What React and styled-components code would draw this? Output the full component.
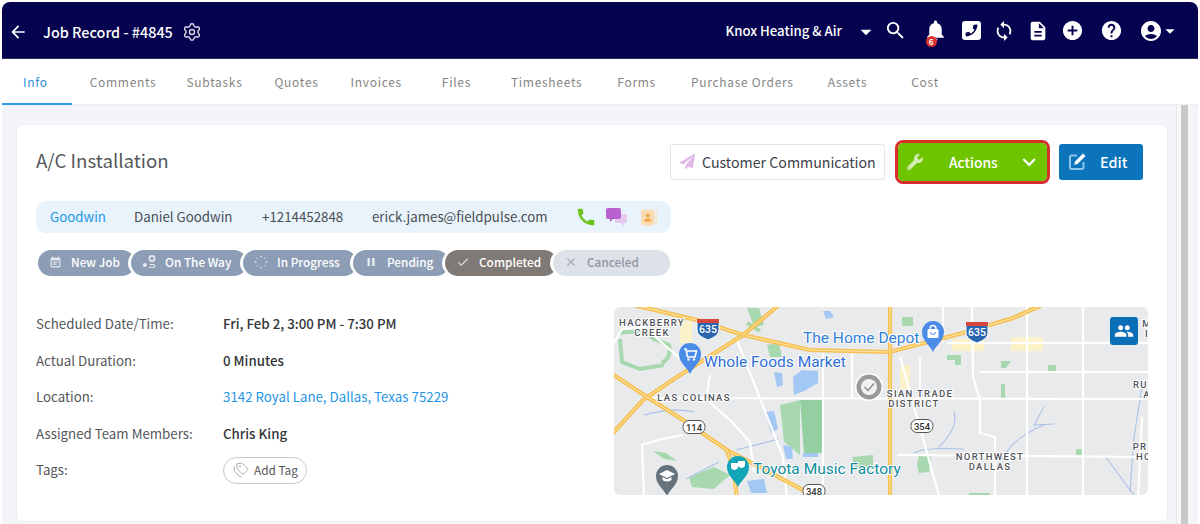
import React from "react";
import styled, { createGlobalStyle } from "styled-components";
import {
  MdArrowBack,
  MdSearch,
  MdNotifications,
  MdSync,
  MdAddCircle,
  MdHelp,
  MdAccountCircle,
  MdArrowDropDown,
  MdDescription,
  MdCall,
  MdPause,
  MdCheck,
  MdClose,
  MdPeople,
  MdExpandMore,
  MdEventNote,
} from "react-icons/md";
import { FaWrench, FaPaperPlane } from "react-icons/fa";
import { Settings, Tags } from "lucide-react";

const GlobalStyle = createGlobalStyle`
  html, body {
    margin: 0;
    padding: 0;
    background: #fff;
  }
  * {
    box-sizing: border-box;
  }
  body {
    font-family: "Noto Sans CJK SC", "Noto Sans", sans-serif;
  }
`;

const TABS = [
  { label: "Info", gap: 0, active: true },
  { label: "Comments", gap: 42 },
  { label: "Subtasks", gap: 30 },
  { label: "Quotes", gap: 32 },
  { label: "Invoices", gap: 32 },
  { label: "Files", gap: 40 },
  { label: "Timesheets", gap: 40 },
  { label: "Forms", gap: 35 },
  { label: "Purchase Orders", gap: 35 },
  { label: "Assets", gap: 34 },
  { label: "Cost", gap: 44 },
];

const STATUSES = [
  { label: "New Job", width: 97, icon: <MdEventNote size={13} />, first: true },
  { label: "On The Way", width: 116, icon: <RouteIcon /> },
  { label: "In Progress", width: 114, icon: <DotsIcon /> },
  { label: "Pending", width: 96, icon: <MdPause size={14} /> },
  { label: "Completed", width: 112, icon: <MdCheck size={14} />, kind: "done" },
  { label: "Canceled", width: 117, icon: <MdClose size={14} />, kind: "off" },
];

function RouteIcon() {
  return (
    <svg width="14" height="14" viewBox="0 0 14 14" fill="none">
      <circle cx="2.800" cy="10" r="2" fill="#fff" />
      <circle cx="10" cy="3.500" r="2.600" stroke="#fff" strokeWidth="1.600" />
      <path d="M7 12.300h4.500a1.400 1.400 0 0 0 0-2.800H8" stroke="#fff" strokeWidth="1.100" />
    </svg>
  );
}

function DotsIcon() {
  const dots = [0, 45, 90, 135, 180, 225, 270, 315];
  return (
    <svg width="14" height="14" viewBox="0 0 14 14">
      {dots.map((a, i) => (
        <circle
          key={a}
          cx={7 + 5.4 * Math.cos((a * Math.PI) / 180)}
          cy={7 + 5.4 * Math.sin((a * Math.PI) / 180)}
          r={i % 2 ? 0.7 : 1}
          fill="#e6ebf2"
        />
      ))}
    </svg>
  );
}

function PhoneBox() {
  return (
    <svg width="19" height="19" viewBox="0 0 19 19">
      <rect width="19" height="19" rx="3" fill="#fff" />
      <path
        d="M14.600 3.600c.5 0 .9.4.8.9-.5 5.800-5.100 10.400-10.900 10.900-.5 0-.9-.3-.9-.8v-2.300c0-.4.3-.7.6-.8l2.500-.5c.3 0 .6 0 .8.300l1 1.500c1.700-.9 3.100-2.300 4-4l-1.400-1.100c-.2-.2-.3-.5-.3-.8l.6-2.500c.1-.4.4-.6.8-.6z"
        fill="#05034f"
      />
    </svg>
  );
}

function ContactBook() {
  return (
    <svg width="16" height="17" viewBox="0 0 16 17">
      <rect x="0" y="0.500" width="13.500" height="16" rx="2" fill="#f9dcb4" />
      <circle cx="6.800" cy="6.500" r="2" fill="#f0a440" />
      <path d="M3 12.500c.3-2.200 1.800-3 3.800-3s3.500.8 3.800 3z" fill="#f0a440" />
      <rect x="14.500" y="2.500" width="1.500" height="3" fill="#f9dcb4" />
      <rect x="14.500" y="7" width="1.500" height="3" fill="#f9dcb4" />
      <rect x="14.500" y="11.500" width="1.500" height="3" fill="#f9dcb4" />
    </svg>
  );
}

function ChatBubbles() {
  return (
    <svg width="21" height="18" viewBox="0 0 21 18">
      <path d="M9 6h10a2 2 0 0 1 2 2v5a2 2 0 0 1-2 2h-1v3l-3-3H9z" fill="#e6c8ee" />
      <path d="M2 0h11a2 2 0 0 1 2 2v7a2 2 0 0 1-2 2H7l-3 3v-3H2a2 2 0 0 1-2-2V2a2 2 0 0 1 2-2z" fill="#b762cf" />
    </svg>
  );
}

function EditGlyph() {
  return (
    <svg width="19" height="19" viewBox="0 0 19 19" fill="none">
      <path
        d="M9 3.500H3.500A1.500 1.500 0 0 0 2 5v10.500A1.500 1.500 0 0 0 3.500 17H14a1.500 1.500 0 0 0 1.500-1.500V10"
        stroke="#8cc4ea"
        strokeWidth="2"
      />
      <path d="M15 1.500l2.500 2.500-8 8-3.300.8.800-3.300z" fill="#fff" />
    </svg>
  );
}

const YELLOW_ROADS = [
  "M19 -2 L83 13 L129 28 L196 43 L276 45 L283 43 L349 26 L399 11 L428 -2",
  "M165 -2 L129 28 L63 70 L29 93 L-2 127",
  "M-2 67 L33 90 L69 113 L113 143 L189 183 L215 192",
  "M113 143 L120 165 L123 192",
  "M276 -2 L276 192",
];

const WHITE_ROADS = [
  "M33 91 L534 92",
  "M333 36 L534 36",
  "M366 65 L534 65",
  "M283 148 L534 150",
  "M329 -2 L329 36",
  "M358 -2 L359 70 L366 93 L366 126 L381 130 L381 192",
  "M413 -2 L413 192",
  "M469 -2 L469 192",
  "M528 110 L524 192",
  "M286 50 L326 192",
  "M123 33 L169 150 L173 192",
  "M209 46 L209 192",
  "M96 68 L92 92 L118 115 L136 135 L140 165",
  "M30 192 L28 138 L48 132 L69 128",
  "M0 36 L8 22 L30 20 L62 48 L78 62",
  "M238 92 L238 46",
  "M306 50 L306 92",
];

const WATER = [
  "M160 65 L168 66 L169 78 L163 80 Z",
  "M179 70 L188 63 L204 64 L204 76 L190 84 L180 88 Z",
  "M151 105 L160 104 L164 122 L157 126 Z",
  "M169 138 L178 140 L179 152 L172 152 Z",
  "M189 146 L204 146 L204 150 L189 150 Z",
  "M133 174 L150 172 L153 186 L137 186 Z",
  "M209 4 L216 4 L220 10 L212 12 Z",
];

const GREEN = [
  "M133 1 L145 1 L150 18 L140 20 Z",
  "M153 38 L165 36 L168 50 L156 50 Z",
  "M166 98 L186 93 L186 148 L170 135 Z",
  "M39 144 L52 146 L63 154 L50 152 Z",
  "M75 170 L100 160 L116 168 L100 182 L78 180 Z",
  "M238 150 L259 148 L259 162 L242 163 Z",
  "M288 10 L299 10 L299 19 L288 19 Z",
  "M333 48 L347 48 L347 58 L341 58 L341 53 L333 53 Z",
  "M387 54 L397 54 L392 61 L387 61 Z",
  "M434 58 L442 58 L442 64 L434 64 Z",
  "M387 77 L391 77 L391 91 L387 91 Z",
  "M462 142 L468 142 L468 148 L462 148 Z",
  "M305 148 L317 148 L315 165 L305 166 L303 158 Z",
  "M355 186 L376 186 L376 190 L355 190 Z",
];

const DARK_GREEN = ["M186 93 L209 93 L209 146 L190 146 Z"];

const GREEN_RIBBONS = [
  "M6 26 Q28 22 40 32 L55 38 Q58 50 48 56",
  "M6 32 L8 55 L26 62 L50 58",
  "M133 16 L146 24",
];

const THIN_BLUE = [
  "M300 146 Q310 140 350 142",
  "M340 105 Q345 120 325 140",
  "M430 100 L420 118 L440 117",
  "M430 118 Q400 130 388 152",
  "M492 150 L510 175 L520 188",
  "M528 80 L520 130 L516 185",
  "M30 108 Q60 100 80 105",
  "M122 143 L165 132",
  "M72 172 L105 155",
];

const PALE = [
  [66, 14, 12, 22],
  [338, 32, 32, 12],
  [397, 30, 32, 14],
  [286, 58, 10, 24],
];

const GmapLabel = styled.text`
  font-family: Roboto, "Liberation Sans", sans-serif;
  font-size: 9.500px;
  font-weight: 500;
  letter-spacing: 1.300px;
  fill: #4f5358;
  text-anchor: middle;
  stroke: #fff;
  stroke-width: 2px;
  paint-order: stroke;
`;

const PoiLabel = styled.text`
  font-family: Roboto, "Liberation Sans", sans-serif;
  font-size: 15.500px;
  fill: ${(p) => p.$color};
  stroke: #fff;
  stroke-width: 2px;
  paint-order: stroke;
`;

const ShieldText = styled.text`
  font-family: Roboto, "Liberation Sans", sans-serif;
  font-size: ${(p) => p.$size}px;
  font-weight: 500;
  fill: ${(p) => p.$color};
  text-anchor: middle;
`;

function Interstate({ x, y }) {
  return (
    <g transform={`translate(${x} ${y})`}>
      <path d="M-11 -8 H11 V2 Q11 8 0 12 Q-11 8 -11 2 Z" fill="#2a66ad" stroke="#fff" />
      <path d="M-11 -9 H11 V-5 H-11 Z" fill="#d8453c" />
      <ShieldText y="5" $size={10.5} $color="#fff">
        635
      </ShieldText>
    </g>
  );
}

function StateRoad({ x, y, text }) {
  return (
    <g transform={`translate(${x} ${y})`}>
      <rect x="-11" y="-6.500" width="22" height="13" rx="6" fill="#fff" stroke="#555" strokeWidth="1" />
      <ShieldText y="3.500" $size={9.5} $color="#333">
        {text}
      </ShieldText>
    </g>
  );
}

function Pin({ x, y, color, children }) {
  return (
    <g transform={`translate(${x} ${y})`}>
      <path d="M0 20 C-3 13 -11 9 -11 0 A11 11 0 1 1 11 0 C11 9 3 13 0 20 Z" fill={color} />
      {children}
    </g>
  );
}

function MapArt() {
  return (
    <svg width="534" height="188" viewBox="0 0 534 188">
      <rect width="534" height="188" fill="#e9eaec" />
      {PALE.map(([x, y, w, h]) => (
        <rect key={x} x={x} y={y} width={w} height={h} fill="#fbf2c9" />
      ))}
      {GREEN.map((d) => (
        <path key={d} d={d} fill="#a8d8b0" />
      ))}
      {DARK_GREEN.map((d) => (
        <path key={d} d={d} fill="#93cfa0" />
      ))}
      {GREEN_RIBBONS.map((d) => (
        <path key={d} d={d} fill="none" stroke="#a8d8b0" strokeWidth="4" />
      ))}
      {WATER.map((d) => (
        <path key={d} d={d} fill="#a3c8f4" />
      ))}
      {THIN_BLUE.map((d) => (
        <path key={d} d={d} fill="none" stroke="#a9c2e8" strokeWidth="1.100" />
      ))}
      {WHITE_ROADS.map((d) => (
        <path key={d} d={d} fill="none" stroke="#fff" strokeWidth="2.200" />
      ))}
      {YELLOW_ROADS.map((d) => (
        <g key={d}>
          <path d={d} fill="none" stroke="#f6bf4f" strokeWidth="4.200" />
          <path d={d} fill="none" stroke="#fdeab0" strokeWidth="1" />
        </g>
      ))}

      <Interstate x={94} y={21} />
      <Interstate x={363} y={24} />
      <StateRoad x={80} y={120} text="114" />
      <StateRoad x={308} y={119} text="354" />
      <StateRoad x={200} y={184} text="348" />

      <GmapLabel x={38} y={19}>HACKBERRY</GmapLabel>
      <GmapLabel x={38} y={29}>CREEK</GmapLabel>
      <GmapLabel x={80} y={94}>LAS COLINAS</GmapLabel>
      <GmapLabel x={306} y={90}>SIAN TRADE</GmapLabel>
      <GmapLabel x={300} y={100}>DISTRICT</GmapLabel>
      <GmapLabel x={376} y={153}>NORTHWEST</GmapLabel>
      <GmapLabel x={376} y={163}>DALLAS</GmapLabel>
      <GmapLabel x={530} y={81}>RUS</GmapLabel>
      <GmapLabel x={533} y={91}>A</GmapLabel>
      <GmapLabel x={526} y={143}>PR</GmapLabel>
      <GmapLabel x={530} y={153}>HO</GmapLabel>
      <GmapLabel x={533} y={20}>M</GmapLabel>
      <GmapLabel x={533} y={30}>I</GmapLabel>

      <PoiLabel x={90} y={60} $color="#2f6fd8">Whole Foods Market</PoiLabel>
      <PoiLabel x={189} y={36} $color="#2f80d8">The Home Depot</PoiLabel>
      <PoiLabel x={139} y={167} $color="#0e8c9c">Toyota Music Factory</PoiLabel>

      <Pin x={76} y={47} color="#4b8ce8">
        <path d="M-6 -5 H-4 L-2.500 3 H5 L6.500 -3 H-3.500" fill="none" stroke="#fff" strokeWidth="1.600" />
        <circle cx="-1.500" cy="5.500" r="1.200" fill="#fff" />
        <circle cx="4" cy="5.500" r="1.200" fill="#fff" />
      </Pin>
      <Pin x={319} y={25} color="#4b8ce8">
        <rect x="-5.500" y="-3" width="11" height="9" rx="1.500" fill="#fff" />
        <path d="M-3 -3 A3 3.500 0 0 1 3 -3" fill="none" stroke="#fff" strokeWidth="1.300" />
        <path d="M-2.500 0 A2.500 2.500 0 0 0 2.500 0" fill="none" stroke="#4b8ce8" strokeWidth="1" />
      </Pin>
      <Pin x={124} y={160} color="#12a5b8">
        <path d="M-7 -4 H0 V1 Q-3.500 5 -7 1 Z" fill="#fff" />
        <path d="M0 -6 H7 V-1 Q3.500 3 0 -1 Z" fill="#fff" />
      </Pin>
      <Pin x={53} y={169} color="#66727c">
        <path d="M0 -6 L8 -2 L0 2 L-8 -2 Z" fill="#fff" />
        <path d="M-4.500 1 V4 Q0 7 4.500 4 V1 L0 3.200 Z" fill="#fff" />
      </Pin>

      <circle cx="255" cy="80" r="14" fill="#fff" />
      <circle cx="255" cy="80" r="12.500" fill="#999" />
      <circle cx="255" cy="80" r="8" fill="#f1f1f1" />
      <path d="M250.500 80 L254 83.500 L260 76.500" fill="none" stroke="#8a8a8a" strokeWidth="1.300" />
    </svg>
  );
}

const App = () => {
  return (
    <Page>
      <GlobalStyle />
      <TopBar>
        <TopLeft>
          <MdArrowBack size={20} />
          <PageTitle>Job Record - #4845</PageTitle>
          <Settings size={20} strokeWidth={1.7} />
        </TopLeft>
        <TopRight>
          <Company>Knox Heating &amp; Air</Company>
          <CompanyCaret>
            <MdArrowDropDown size={26} />
          </CompanyCaret>
          <TopIcon $w={20} $left={6}>
            <MdSearch size={23} />
          </TopIcon>
          <BellIcon>
            <MdNotifications size={25} />
            <Badge>6</Badge>
          </BellIcon>
          <TopIcon $w={19} $left={16}>
            <PhoneBox />
          </TopIcon>
          <TopIcon $w={20} $left={13.5}>
            <MdSync size={22} />
          </TopIcon>
          <TopIcon $w={20} $left={14}>
            <MdDescription size={22} />
          </TopIcon>
          <TopIcon $w={22} $left={13}>
            <MdAddCircle size={23} />
          </TopIcon>
          <TopIcon $w={22} $left={17.5}>
            <MdHelp size={23} />
          </TopIcon>
          <TopIcon $w={22} $left={17.5}>
            <MdAccountCircle size={24} />
          </TopIcon>
          <UserCaret>
            <MdArrowDropDown size={22} />
          </UserCaret>
        </TopRight>
      </TopBar>

      <TabBar>
        {TABS.map((tab) => (
          <Tab key={tab.label} $gap={tab.gap} $active={tab.active}>
            {tab.label}
          </Tab>
        ))}
      </TabBar>

      <Body>
        <Card>
          <CardHead>
            <JobTitle>A/C Installation</JobTitle>
            <Actions>
              <GhostButton>
                <PlaneIcon>
                  <FaPaperPlane size={15} />
                </PlaneIcon>
                Customer Communication
              </GhostButton>
              <ActionsRing>
                <ActionsButton>
                  <WrenchIcon>
                    <FaWrench size={16} />
                  </WrenchIcon>
                  <span>Actions</span>
                  <MdExpandMore size={28} />
                </ActionsButton>
              </ActionsRing>
              <EditButton>
                <EditIcon>
                  <EditGlyph />
                </EditIcon>
                Edit
              </EditButton>
            </Actions>
          </CardHead>

          <ContactBar>
            <CustomerLink>Goodwin</CustomerLink>
            <ContactText $w={128}>Daniel Goodwin</ContactText>
            <ContactText $w={110}>+1214452848</ContactText>
            <ContactText $w={205}>erick.james@fieldpulse.com</ContactText>
            <ContactIcons>
              <GreenCall>
                <MdCall size={22} />
              </GreenCall>
              <ChatWrap>
                <ChatBubbles />
              </ChatWrap>
              <ContactBook />
            </ContactIcons>
          </ContactBar>

          <StatusRow>
            {STATUSES.map((s) => (
              <Status key={s.label} $w={s.width} $kind={s.kind} $first={s.first}>
                <StatusIcon>{s.icon}</StatusIcon>
                {s.label}
              </Status>
            ))}
          </StatusRow>

          <Lower>
            <Details>
              <Row>
                <Label>Scheduled Date/Time:</Label>
                <Value>Fri, Feb 2, 3:00 PM - 7:30 PM</Value>
              </Row>
              <Row>
                <Label>Actual Duration:</Label>
                <Value>0 Minutes</Value>
              </Row>
              <Row>
                <Label>Location:</Label>
                <LocationLink>3142 Royal Lane, Dallas, Texas 75229</LocationLink>
              </Row>
              <Row>
                <Label>Assigned Team Members:</Label>
                <Value>Chris King</Value>
              </Row>
              <Row>
                <Label>Tags:</Label>
                <TagButton>
                  <Tags size={16} strokeWidth={1.2} color="#999" />
                  Add Tag
                </TagButton>
              </Row>
            </Details>
            <MapBox>
              <MapArt />
              <TeamButton>
                <MdPeople size={20} />
              </TeamButton>
            </MapBox>
          </Lower>
        </Card>
        <ScrollTrack>
          <ScrollThumb />
        </ScrollTrack>
      </Body>
    </Page>
  );
};

const Page = styled.div`
  width: 1200px;
  height: 524px;
  overflow: hidden;
  padding: 2px 2px 0;
  display: flex;
  flex-direction: column;
  background: #fff;
`;

const TopBar = styled.div`
  height: 57px;
  flex: none;
  background: #05034f;
  border-radius: 8px 8px 0 0;
  border-bottom: 1px solid #2a2a55;
  color: #fff;
  display: flex;
  align-items: center;
  justify-content: space-between;
  padding: 3px 0 0 6px;
`;

const TopLeft = styled.div`
  display: flex;
  align-items: center;
  color: #fff;
  svg:last-child {
    margin-left: 9px;
    color: #d8d8e6;
  }
`;

const PageTitle = styled.div`
  margin-left: 15px;
  font-size: 14.4px;
  font-weight: 500;
  line-height: 20px;
`;

const TopRight = styled.div`
  display: flex;
  align-items: center;
  height: 100%;
  padding-bottom: 2px;
`;

const Company = styled.div`
  font-size: 13.2px;
  font-weight: 500;
  line-height: 20px;
`;

const CompanyCaret = styled.div`
  display: flex;
  margin-left: 11px;
  margin-top: 2px;
`;

const TopIcon = styled.div`
  width: ${(p) => p.$w}px;
  margin-left: ${(p) => p.$left}px;
  display: flex;
  justify-content: center;
  color: #fff;
  svg {
    flex: none;
  }
`;

const BellIcon = styled(TopIcon).attrs({ $w: 20, $left: 20.5 })`
  position: relative;
`;

const Badge = styled.div`
  position: absolute;
  left: 0;
  bottom: -4px;
  width: 11px;
  height: 11px;
  border-radius: 50%;
  background: #e0332f;
  color: #fff;
  font-size: 8px;
  font-weight: 700;
  line-height: 11px;
  text-align: center;
`;

const UserCaret = styled.div`
  display: flex;
  margin-left: -3px;
  margin-right: 17px;
`;

const TabBar = styled.div`
  height: 46px;
  flex: none;
  display: flex;
  background: #fff;
  border-bottom: 1px solid #eceef2;
`;

const Tab = styled.div`
  height: 46px;
  margin-left: ${(p) => p.$gap}px;
  padding: ${(p) => (p.$active ? "0 24px 0 21px" : "0")};
  font-size: 12px;
  letter-spacing: 0.7px;
  line-height: 46px;
  color: ${(p) => (p.$active ? "#2d8fd8" : "#858585")};
  border-bottom: ${(p) => (p.$active ? "2px solid #2d9be8" : "none")};
  margin-right: ${(p) => (p.$active ? "-24px" : "0")};
`;

const Body = styled.div`
  flex: 1;
  min-height: 0;
  display: flex;
  background: #f3f5f9;
  padding: 19px 2px 0 14px;
`;

const Card = styled.div`
  width: 1152px;
  height: 398px;
  background: #fff;
  border: 1px solid #eceef2;
  border-radius: 6px;
  padding: 17px 19px 0;
  flex: none;
`;

const ScrollTrack = styled.div`
  width: 12px;
  margin-left: 8px;
  margin-top: -19px;
  background: #f8f8f8;
  border-left: 1px solid #e8e8e8;
  display: flex;
  justify-content: flex-end;
`;

const ScrollThumb = styled.div`
  width: 7px;
  height: 100%;
  background: #c7c9c9;
`;

const CardHead = styled.div`
  display: flex;
  align-items: center;
  justify-content: space-between;
  height: 39px;
`;

const JobTitle = styled.div`
  font-size: 18.7px;
  font-weight: 400;
  line-height: 26px;
  margin-bottom: 4px;
  color: #55585c;
`;

const Actions = styled.div`
  display: flex;
  align-items: center;
  margin-right: 5px;
`;

const GhostButton = styled.div`
  width: 215px;
  height: 36px;
  display: flex;
  align-items: center;
  padding-left: 9px;
  background: #fff;
  border: 1px solid #e2e5ea;
  border-radius: 3px;
  font-size: 14.2px;
  color: #3d4148;
  line-height: 20px;
  white-space: nowrap;
`;

const PlaneIcon = styled.span`
  display: flex;
  margin-right: 7px;
  color: #dfb9e6;
`;

const ActionsRing = styled.div`
  margin-left: 10px;
  border: 3px solid #d92e2e;
  border-radius: 8px;
  background: #fff;
`;

const ActionsButton = styled.div`
  width: 149px;
  height: 38px;
  background: #6fc400;
  border-radius: 5px;
  display: flex;
  align-items: center;
  color: #fff;
  font-size: 13.8px;
  font-weight: 500;
  padding: 0 5px 0 9px;
  line-height: 20px;
  span:nth-child(2) {
    margin-left: 26px;
    margin-right: 18px;
  }
`;

const WrenchIcon = styled.span`
  display: flex;
  color: #d4edb3;
`;

const EditButton = styled.div`
  width: 84px;
  height: 36px;
  margin-left: 9px;
  background: #0b74bb;
  border-radius: 3px;
  display: flex;
  align-items: center;
  padding-left: 9px;
  color: #fff;
  font-size: 14.4px;
  font-weight: 500;
  line-height: 20px;
`;

const EditIcon = styled.span`
  display: flex;
  margin-right: 13px;
`;

const ContactBar = styled.div`
  width: 635px;
  height: 32px;
  margin-top: 20px;
  background: #e8f3fb;
  border-radius: 10px;
  display: flex;
  align-items: center;
  padding-left: 14px;
  font-size: 13.3px;
  line-height: 20px;
`;

const CustomerLink = styled.div`
  width: 84px;
  color: #2196e8;
`;

const ContactText = styled.div`
  width: ${(p) => p.$w}px;
  color: #4a4d52;
`;

const ContactIcons = styled.div`
  display: flex;
  align-items: center;
`;

const GreenCall = styled.span`
  display: flex;
  color: #6cc31c;
  margin-right: 9px;
  margin-left: -2px;
`;

const ChatWrap = styled.span`
  display: flex;
  margin-right: 14px;
`;

const StatusRow = styled.div`
  display: flex;
  margin-top: 17px;
  margin-left: 2px;
`;

const statusBg = { done: "#7f7a76", off: "#dde1e8" };

const Status = styled.div`
  position: relative;
  width: ${(p) => p.$w}px;
  height: 26px;
  margin-left: ${(p) => (p.$first ? "0" : "-4px")};
  padding: 0 0 2px ${(p) => (p.$first ? "10px" : "11px")};
  display: flex;
  align-items: center;
  background: ${(p) => statusBg[p.$kind] || "#8c9db5"};
  color: ${(p) => (p.$kind === "off" ? "#8f97a3" : "#fff")};
  border-radius: 13px;
  box-shadow: ${(p) => (p.$first ? "none" : "-3px 0 0 0 #fff")};
  font-size: 11.8px;
  font-weight: 500;
  line-height: 18px;
`;

const StatusIcon = styled.span`
  width: 14px;
  display: flex;
  justify-content: center;
  margin-right: 9px;
  opacity: 0.8;
`;

const Lower = styled.div`
  display: flex;
  justify-content: space-between;
  margin-top: 31px;
`;

const Details = styled.div`
  display: flex;
  flex-direction: column;
  gap: 16.5px;
  padding-top: 7px;
`;

const Row = styled.div`
  display: flex;
  align-items: center;
  height: 20px;
  font-size: 13.3px;
  line-height: 20px;
`;

const Label = styled.div`
  width: 187px;
  color: #54575b;
`;

const Value = styled.div`
  color: #333538;
  font-weight: 500;
`;

const LocationLink = styled.div`
  color: #1f95e6;
`;

const TagButton = styled.div`
  width: 84px;
  height: 27px;
  border: 1px solid #c8c8c8;
  border-radius: 14px;
  display: flex;
  align-items: center;
  gap: 5px;
  padding-left: 9px;
  font-size: 11.8px;
  color: #555;
`;

const MapBox = styled.div`
  position: relative;
  width: 534px;
  height: 188px;
  border-radius: 6px;
  overflow: hidden;
  svg {
    display: block;
  }
`;

const TeamButton = styled.div`
  position: absolute;
  left: 496px;
  top: 10px;
  width: 28px;
  height: 28px;
  border-radius: 3px;
  background: #0b6fb8;
  color: #fff;
  display: flex;
  align-items: center;
  justify-content: center;
`;

export default App;
